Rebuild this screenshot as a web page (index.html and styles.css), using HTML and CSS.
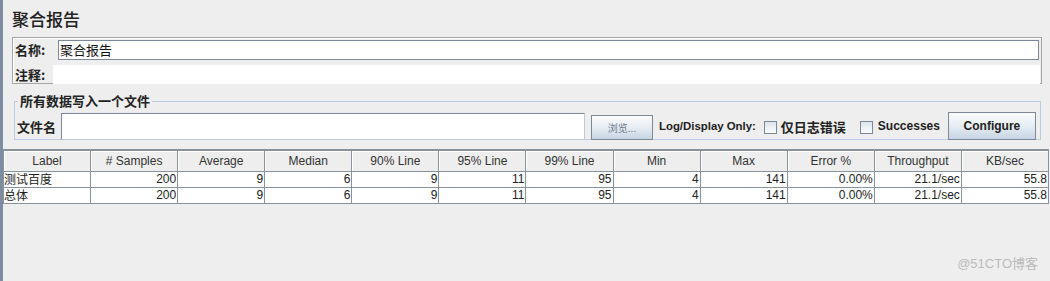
FILE: index.html
```html
<!DOCTYPE html>
<html lang="zh-CN">
<head>
    <meta charset="UTF-8">
    <title>聚合报告</title>
    <link rel="stylesheet" href="styles.css">
</head>
<body>
    <div class="frame">
        <div class="side-strip"></div>
        <div class="content">
            <h1 class="report-title">聚合报告</h1>

            <div class="name-box">
                <div class="name-row">
                    <label class="field-label">名称:</label>
                    <div class="text-input name-input">聚合报告</div>
                </div>
                <div class="comment-row">
                    <label class="field-label">注释:</label>
                    <div class="comment-input"></div>
                </div>
            </div>

            <fieldset class="file-set">
                <legend>所有数据写入一个文件</legend>
                <div class="file-row">
                    <label class="field-label file-label">文件名</label>
                    <div class="text-input file-input"></div>
                    <button class="btn browse-btn">浏览...</button>
                    <span class="log-label">Log/Display Only:</span>
                    <span class="check"></span>
                    <span class="check-label">仅日志错误</span>
                    <span class="check"></span>
                    <span class="check-label latin">Successes</span>
                    <button class="btn configure-btn">Configure</button>
                </div>
            </fieldset>

            <table class="results">
                <thead>
                    <tr>
                        <th>Label</th>
                        <th># Samples</th>
                        <th>Average</th>
                        <th>Median</th>
                        <th>90% Line</th>
                        <th>95% Line</th>
                        <th>99% Line</th>
                        <th>Min</th>
                        <th>Max</th>
                        <th>Error %</th>
                        <th>Throughput</th>
                        <th>KB/sec</th>
                    </tr>
                </thead>
                <tbody>
                    <tr>
                        <td class="label-cell">测试百度</td>
                        <td>200</td><td>9</td><td>6</td><td>9</td><td>11</td><td>95</td>
                        <td>4</td><td>141</td><td>0.00%</td><td>21.1/sec</td><td>55.8</td>
                    </tr>
                    <tr>
                        <td class="label-cell">总体</td>
                        <td>200</td><td>9</td><td>6</td><td>9</td><td>11</td><td>95</td>
                        <td>4</td><td>141</td><td>0.00%</td><td>21.1/sec</td><td>55.8</td>
                    </tr>
                </tbody>
            </table>

            <div class="watermark">@51CTO博客</div>
        </div>
    </div>
</body>
</html>
```

FILE: styles.css
```css
* {
    margin: 0;
    padding: 0;
    box-sizing: border-box;
}

body {
    background: #eeeeee;
    font-family: "Liberation Sans", "Noto Sans CJK SC", sans-serif;
    font-size: 12px;
    color: #333333;
    overflow: hidden;
}

.frame {
    display: flex;
    height: 281px;
}

.side-strip {
    width: 3px;
    flex: none;
    background: #7d8ca0;
}

.content {
    flex: 1;
    position: relative;
}

/* --- 标题 --- */
.report-title {
    font-family: "Noto Sans CJK SC", sans-serif;
    font-size: 17px;
    font-weight: 500;
    color: #222;
    line-height: 20px;
    padding: 9px 0 0 9px;
    height: 34px;
}

/* --- 名称 / 注释 --- */
.name-box {
    margin: 3px 0 0 9px;
    width: 1030px;
    height: 47px;
    border: 1px solid #a6a6a6;
    box-shadow: inset 1px 1px 0 #fff;
    padding: 1px 1px 0 1px;
}

.field-label {
    font-family: "Noto Sans CJK SC", sans-serif;
    font-weight: 700;
    font-size: 13px;
    color: #222;
    white-space: nowrap;
    flex: none;
}

.name-row {
    display: flex;
    align-items: center;
    height: 21px;
}
.name-row .field-label {
    width: 44px;
    padding-left: 1px;
}

.text-input {
    background: #fff;
    border: 1px solid #7a8899;
    border-right-color: #c0c8d0;
    border-bottom-color: #c0c8d0;
}

.name-input {
    flex: 1;
    height: 20px;
    margin-right: 1px;
    font-family: "Noto Sans CJK SC", sans-serif;
    font-size: 13px;
    line-height: 18px;
    padding-left: 1px;
    color: #111;
    border-right-color: #7a8899;
    border-bottom-color: #7a8899;
}

.comment-row {
    display: flex;
    align-items: center;
    height: 19px;
    margin-top: 5px;
}
.comment-row .field-label {
    width: 39px;
    padding-left: 1px;
}
.comment-input {
    flex: 1;
    height: 19px;
    background: #fff;
}

/* --- 写入文件 --- */
.file-set {
    margin: 10px 0 0 11px;
    width: 1027px;
    height: 46px;
    border: 1px solid #b8cde3;
    padding: 4px 0 0 2px;
}
.file-set legend {
    font-family: "Noto Sans CJK SC", sans-serif;
    font-weight: 700;
    font-size: 13px;
    color: #222;
    padding: 0 2px;
    margin-left: 1px;
    line-height: 14px;
}

.file-row {
    display: flex;
    align-items: center;
    height: 28px;
    white-space: nowrap;
}
.file-row > * {
    flex: none;
}

.file-label {
    width: 44px;
}

.file-input {
    width: 524px;
    height: 27px;
}

.btn {
    border: 1px solid #7a8899;
    background: linear-gradient(#fbfcfd, #e4ebf2 55%, #c6d4e3);
    color: #222;
    font-family: "Liberation Sans", sans-serif;
}

.browse-btn {
    width: 62px;
    height: 25px;
    margin-left: 6px;
    margin-top: 2px;
    font-family: "Noto Sans CJK SC", sans-serif;
    font-size: 10px;
    color: #6c7c90;
}

.log-label {
    font-weight: 700;
    font-size: 11.4px;
    margin-left: 6px;
    color: #222;
}

.check {
    width: 13px;
    height: 13px;
    border: 1px solid #7a8899;
    background: linear-gradient(#dde4ec, #fbfcfd);
    margin-left: 8px;
    margin-top: 2px;
}

.check-label {
    font-family: "Noto Sans CJK SC", sans-serif;
    font-weight: 700;
    font-size: 13px;
    color: #222;
    margin-left: 4px;
    margin-right: 6px;
}
.check-label.latin {
    font-family: "Liberation Sans", sans-serif;
    font-size: 12px;
    margin-left: 5px;
    margin-right: 8px;
}

.configure-btn {
    width: 88px;
    height: 28px;
    font-size: 12px;
    font-weight: 700;
}

/* --- 结果表格 --- */
.results {
    margin-top: 9px;
    width: 1046px;
    table-layout: fixed;
    border-collapse: collapse;
    font-family: "Liberation Sans", "Noto Sans CJK SC", sans-serif;
    font-size: 12px;
}

.results th {
    height: 21px;
    font-weight: 400;
    color: #333;
    background: #eeeeee;
    border: 1px solid #8893a0;
    border-top-width: 2px;
    text-align: center;
    box-shadow: inset 1px 1px 0 #fff;
}

.results td {
    height: 16px;
    line-height: 14px;
    background: #fff;
    border: 1px solid #8893a0;
    text-align: right;
    padding: 0 1px;
    color: #222;
    white-space: nowrap;
}

.results td.label-cell {
    text-align: left;
    font-family: "Noto Sans CJK SC", sans-serif;
    font-size: 12px;
    padding-left: 0;
}

.watermark {
    position: absolute;
    right: 12px;
    bottom: 9px;
    font-size: 13px;
    color: #bbbbbb;
    font-family: "Liberation Sans", "Noto Sans CJK SC", sans-serif;
}
```
